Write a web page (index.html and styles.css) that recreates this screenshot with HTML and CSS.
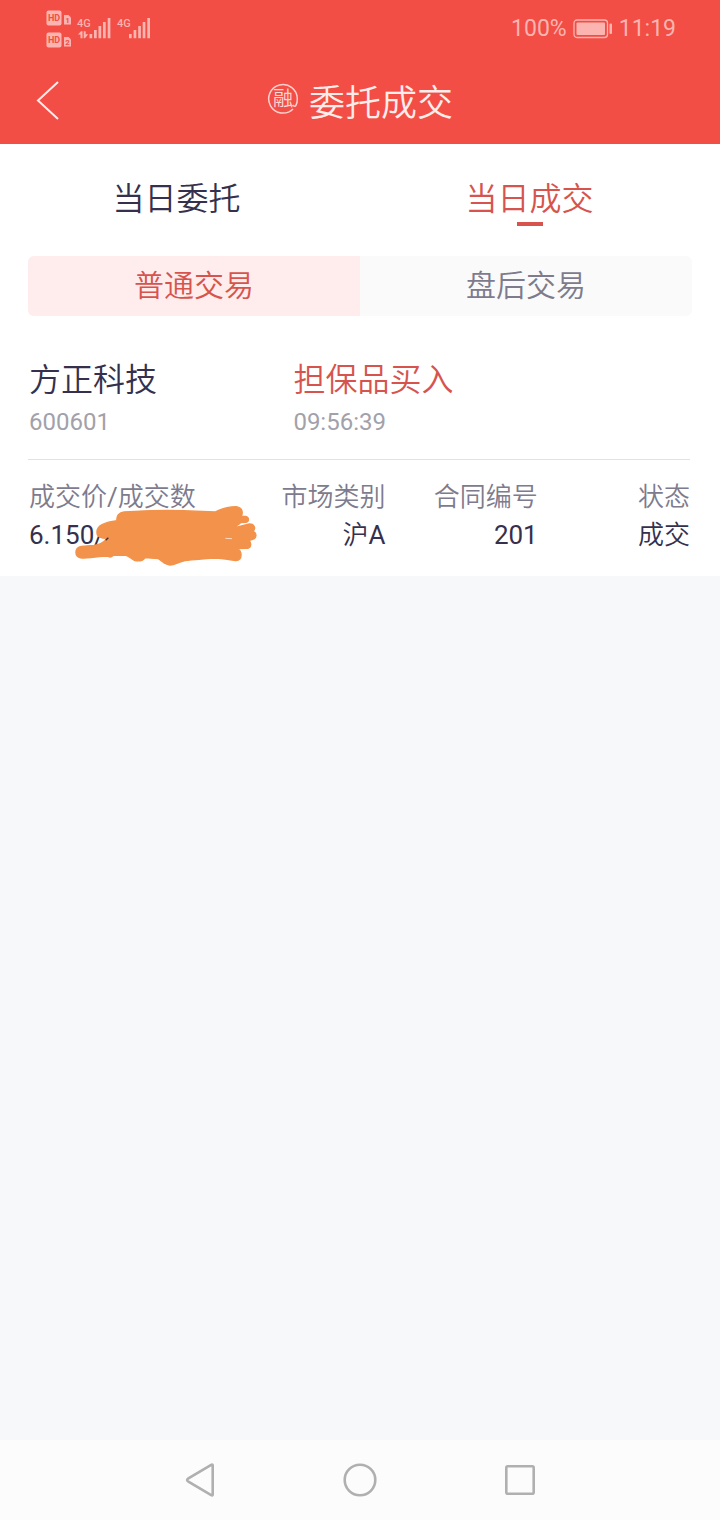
FILE: index.html
```html
<!DOCTYPE html>
<html lang="zh-CN">
<head>
<meta charset="utf-8">
<meta name="viewport" content="width=device-width, initial-scale=1">
<title>委托成交</title>
<link rel="stylesheet" href="styles.css">
</head>
<body>
<header class="top">
  <div class="status">
    <svg class="signals" viewBox="44 6 110 44" aria-hidden="true">
      <g class="soft">
        <rect x="46.5" y="10.5" width="15" height="15" rx="2"/>
        <path d="M64 15h4.500l2.500 2.500v7h-7z"/>
        <rect x="46.500" y="32.500" width="15" height="15" rx="2"/>
        <path d="M64 37h4.500l2.500 2.500v7h-7z"/>
        <path d="M89.500 34h2.700v4.200h-2.700zM94 30h2.700v8.200H94zM98.500 26h2.700v12.200h-2.700zM103 22h2.700v16.200H103zM107.700 18h2.700v20.200h-2.700z"/>
        <path d="M129 34h2.700v4.200H129zM133.600 30h2.700v8.200h-2.700zM138.200 26h2.700v12.200h-2.700zM142.700 22h2.700v16.200h-2.700zM147.300 18h2.700v20.200h-2.700z"/>
        <path d="M78 34.500 81 31.200h1.500v7h-2v-3.700zM83.700 31.200h2v3h2.500L85 38.200h-1.300z"/>
        <text class="net" x="77" y="26.500">4G</text>
        <text class="net" x="117" y="26.500">4G</text>
      </g>
      <g class="cut">
        <text class="hd" x="54" y="21.300">HD</text>
        <text class="hd" x="54" y="43.300">HD</text>
        <text class="sim" x="67.500" y="23">1</text>
        <text class="sim" x="67.500" y="45">2</text>
      </g>
    </svg>
    <div class="power">
      <span>100%</span>
      <svg class="battery" viewBox="0 0 40 20" aria-hidden="true">
        <rect x="1" y="1" width="33.500" height="17.500" rx="3" class="shell"/>
        <rect x="3.500" y="3.500" width="28.500" height="12.500" rx="1" class="soft"/>
        <rect x="36.500" y="4.500" width="2.500" height="10.500" rx="1" class="soft"/>
      </svg>
      <span>11:19</span>
    </div>
  </div>
  <div class="titlebar">
    <button class="back" type="button" aria-label="返回">
      <svg viewBox="0 0 24 40"><path d="M22 2 2 20.500 22 39"/></svg>
    </button>
    <h1 class="title">
      <svg class="seal" viewBox="0 0 32 32" aria-hidden="true">
        <path d="M26 26A14.300 14.300 0 1 1 30.300 16c0 2.500-.3 4.300-1.200 6-1 1.700-2.800 1.300-3.600 0"/>
        <text x="16" y="22.500">融</text>
      </svg>
      <span>委托成交</span>
    </h1>
  </div>
</header>

<main class="content">
  <nav class="tabs">
    <button class="tab" type="button">当日委托</button>
    <button class="tab current" type="button">当日成交</button>
  </nav>
  <div class="segments">
    <button class="segment chosen" type="button">普通交易</button>
    <button class="segment" type="button">盘后交易</button>
  </div>
  <section class="record">
    <div class="summary">
      <div>
        <div class="name">方正科技</div>
        <div class="sub">600601</div>
      </div>
      <div>
        <div class="name buy">担保品买入</div>
        <div class="sub">09:56:39</div>
      </div>
    </div>
    <table class="details">
      <thead>
        <tr><th scope="col">成交价/成交数</th><th scope="col">市场类别</th><th scope="col">合同编号</th><th scope="col">状态</th></tr>
      </thead>
      <tbody>
        <tr>
          <td><div class="masked">6.150/
            <svg class="scribble" viewBox="165 108 546 180" aria-hidden="true">
              <path class="ink" d="M185 264C162 262 162 232 185 229L222 226C240 224 250 218 262 205C246 206 230 200 231 188C228 168 255 156 291 152C288 138 298 127 312 126L345 124C400 121 440 120 490 122L585 126C605 116 630 110 648 110C666 112 670 126 664 139L677 139C688 141 688 155 678 157L662 158C655 164 645 170 641 174L688 162C705 162 708 178 698 184C712 188 710 204 700 207L686 212C695 217 694 232 684 235L650 236C668 242 668 270 648 272C630 268 610 266 585 264C550 266 510 270 495 272C475 276 465 284 450 285C435 284 428 274 415 266L375 263C370 272 358 274 345 272C335 268 330 260 318 256L280 256C274 262 268 262 264 258C240 258 210 264 185 264Z"/>
              <path class="gap" d="M616 205l20 1"/>
              <path class="trace" d="M257 211l8-8"/>
            </svg></div></td>
          <td>沪A</td><td>201</td><td>成交</td>
        </tr>
      </tbody>
    </table>
  </section>
</main>

<footer class="system">
  <button class="key" type="button" aria-label="后退"><svg viewBox="0 0 40 40"><path d="M32.700 5.600v28.800q0 1.600-1.500.8L8 21.300q-1.800-1.300 0-2.600L31.200 4.800q1.500-.8 1.500.8z"/></svg></button>
  <button class="key" type="button" aria-label="主页"><svg viewBox="0 0 40 40"><circle cx="20" cy="20" r="15.300"/></svg></button>
  <button class="key" type="button" aria-label="最近任务"><svg viewBox="0 0 40 40"><rect x="6.300" y="6.300" width="27.400" height="27.400" rx="1.500"/></svg></button>
</footer>
</body>
</html>
```
FILE: styles.css
```css
* { box-sizing: border-box; }

body {
  margin: 0;
  min-height: 100vh;
  display: flex;
  flex-direction: column;
  background: #f6f8fa;
  color: #34304d;
  font-family: Roboto, "Noto Sans CJK SC DemiLight", "Noto Sans CJK SC", sans-serif;
}

button {
  border: 0;
  padding: 0;
  margin: 0;
  background: none;
  color: inherit;
  font: inherit;
}

svg { display: block; }

.top { background: #f24e46; color: #ffeceb; }

.status {
  height: 56px;
  padding: 2px 44px 0;
  display: flex;
  justify-content: space-between;
  align-items: center;
}
.signals { width: 110px; height: 44px; margin-bottom: 2px; }
.soft { fill: #fbb4b0; }
.cut { fill: #f24e46; font-weight: 700; text-anchor: middle; }
.net { font-size: 11px; font-weight: 500; }
.hd { font-size: 9px; }
.sim { font-size: 8px; }
.power {
  display: flex;
  align-items: center;
  gap: 6px;
  color: #fbb4b0;
  font-size: 23px;
  line-height: 28px;
}
.battery { width: 40px; height: 20px; }
.shell { fill: none; stroke: #fbb4b0; stroke-width: 1.3; }

.titlebar {
  height: 88px;
  padding: 0 36px;
  display: grid;
  grid-template-columns: 48px 1fr 48px;
  align-items: center;
}
.back svg { width: 24px; height: 40px; fill: none; stroke: #ffeceb; stroke-width: 2; }
.title {
  margin: 0;
  padding-top: 8px;
  display: flex;
  justify-content: center;
  align-items: center;
  gap: 10px;
  font-size: 36px;
  line-height: 52px;
  font-weight: 400;
}
.seal { width: 32px; height: 32px; margin-bottom: 10px; }
.seal path { fill: none; stroke: #ffd0cd; stroke-width: 1.5; }
.seal text { fill: #ffd9d7; font-size: 20px; text-anchor: middle; }

.content { background: #fff; }

.tabs {
  display: flex;
  height: 112px;
  padding-right: 14px;
}
.tab {
  flex: 1;
  display: flex;
  flex-direction: column;
  align-items: center;
  padding-top: 32px;
  font-size: 32px;
  line-height: 46px;
}
.current { color: #d6544d; }
.current::after {
  content: "";
  width: 26px;
  height: 4px;
  background: #d6544d;
}

.segments {
  display: flex;
  margin: 0 28px;
  border-radius: 6px;
  overflow: hidden;
  background: #fafafb;
  color: #7d7b8d;
}
.segment { flex: 1; height: 60px; font-size: 30px; line-height: 44px; }
.chosen { background: #ffecec; color: #d6544d; }

.record { padding: 40px 30px 22px 28px; }
.summary {
  display: grid;
  grid-template-columns: 2fr 3fr;
  padding: 0 0 19px 1px;
  border-bottom: 1px solid #e1e2e5;
}
.name { font-size: 32px; line-height: 48px; }
.buy { color: #d6544d; }
.sub { font-size: 24px; line-height: 36px; color: #a2a1aa; }

.details {
  width: 100%;
  margin-top: 18px;
  border-collapse: collapse;
  table-layout: fixed;
  font-size: 26px;
  line-height: 38px;
}
.details th, .details td { padding: 0; text-align: right; font-weight: 400; }
.details th { width: 23%; color: #7d7b8d; }
.details th:first-child { width: 31%; }
.details th:first-child, .details td:first-child { padding-left: 1px; text-align: left; }

.masked { position: relative; }
.scribble { position: absolute; left: 46px; top: -10px; width: 182px; height: 60px; }
.ink { fill: #f3924a; stroke: #f3924a; stroke-width: 4; stroke-linejoin: round; }
.gap { fill: none; stroke: #fff; stroke-width: 2; }
.trace { fill: none; stroke: #34304d; stroke-width: 4; }

.system {
  margin-top: auto;
  height: 80px;
  display: flex;
  justify-content: center;
  align-items: center;
  gap: 120px;
  background: #fcfcfc;
}
.key svg { width: 40px; height: 40px; fill: none; stroke: #b0b0b0; stroke-width: 2.6; }
```
